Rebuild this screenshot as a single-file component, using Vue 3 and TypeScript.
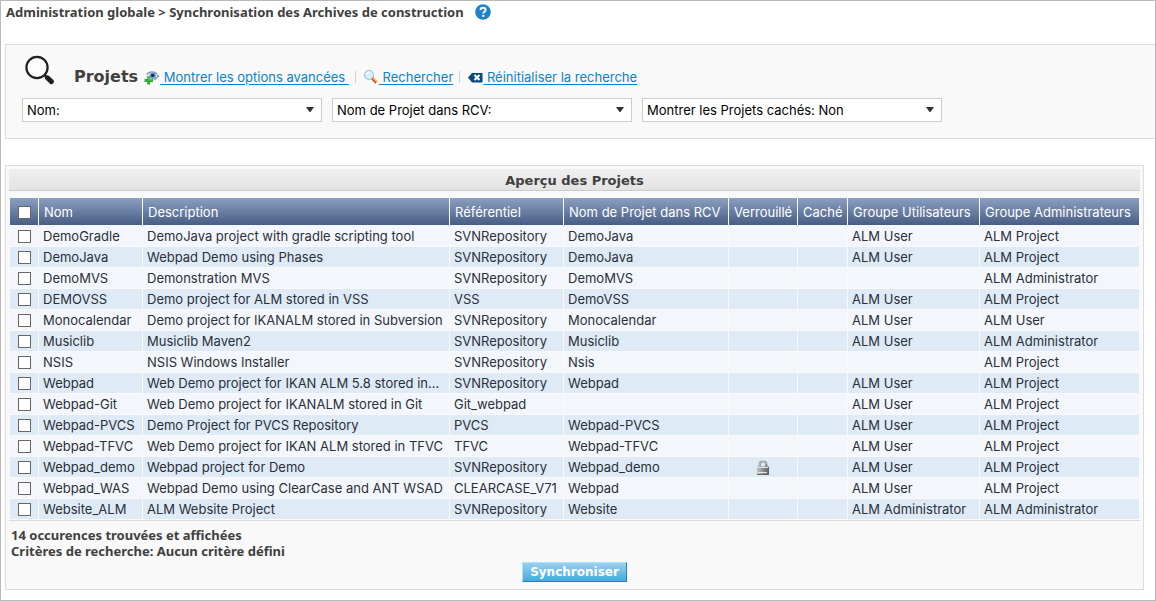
<script setup lang="ts">
interface Project {
  name: string
  description: string
  repository: string
  vcrName: string
  locked?: boolean
  users: string
  admins: string
}

const user = 'ALM User'
const project = 'ALM Project'
const admin = 'ALM Administrator'

const projects: Project[] = [
  { name: 'DemoGradle', description: 'DemoJava project with gradle scripting tool', repository: 'SVNRepository', vcrName: 'DemoJava', users: user, admins: project },
  { name: 'DemoJava', description: 'Webpad Demo using Phases', repository: 'SVNRepository', vcrName: 'DemoJava', users: user, admins: project },
  { name: 'DemoMVS', description: 'Demonstration MVS', repository: 'SVNRepository', vcrName: 'DemoMVS', users: '', admins: admin },
  { name: 'DEMOVSS', description: 'Demo project for ALM stored in VSS', repository: 'VSS', vcrName: 'DemoVSS', users: user, admins: project },
  { name: 'Monocalendar', description: 'Demo project for IKANALM stored in Subversion', repository: 'SVNRepository', vcrName: 'Monocalendar', users: user, admins: user },
  { name: 'Musiclib', description: 'Musiclib Maven2', repository: 'SVNRepository', vcrName: 'Musiclib', users: user, admins: admin },
  { name: 'NSIS', description: 'NSIS Windows Installer', repository: 'SVNRepository', vcrName: 'Nsis', users: '', admins: project },
  { name: 'Webpad', description: 'Web Demo project for IKAN ALM 5.8 stored in...', repository: 'SVNRepository', vcrName: 'Webpad', users: user, admins: project },
  { name: 'Webpad-Git', description: 'Web Demo project for IKANALM stored in Git', repository: 'Git_webpad', vcrName: '', users: user, admins: project },
  { name: 'Webpad-PVCS', description: 'Demo Project for PVCS Repository', repository: 'PVCS', vcrName: 'Webpad-PVCS', users: user, admins: project },
  { name: 'Webpad-TFVC', description: 'Web Demo project for IKAN ALM stored in TFVC', repository: 'TFVC', vcrName: 'Webpad-TFVC', users: user, admins: project },
  { name: 'Webpad_demo', description: 'Webpad project for Demo', repository: 'SVNRepository', vcrName: 'Webpad_demo', locked: true, users: user, admins: project },
  { name: 'Webpad_WAS', description: 'Webpad Demo using ClearCase and ANT WSAD', repository: 'CLEARCASE_V71', vcrName: 'Webpad', users: user, admins: project },
  { name: 'Website_ALM', description: 'ALM Website Project', repository: 'SVNRepository', vcrName: 'Website', users: admin, admins: admin },
]

const filters = ['Nom:', 'Nom de Projet dans RCV:', 'Montrer les Projets cachés: Non']
</script>

<template>
  <main class="page">
    <header class="crumbs">
      <span>Administration globale &gt; Synchronisation des Archives de construction</span>
      <a href="#" class="help" aria-label="Aide">
        <svg width="16" height="16" viewBox="0 0 16 16">
          <circle cx="8" cy="8" r="7.8" fill="#1c83c6" />
          <path d="M5.400 6.200C5.500 4.500 6.500 3.700 8 3.700c1.600 0 2.600.9 2.600 2.200 0 1.900-2.300 1.900-2.300 3.700" fill="none" stroke="#fff" stroke-width="1.900" />
          <rect x="7.200" y="10.800" width="2.100" height="2.100" fill="#fff" />
        </svg>
      </a>
    </header>

    <section class="search">
      <div class="search-head">
        <svg class="lens" width="30" height="30" viewBox="0 0 30 30">
          <circle cx="12" cy="12.500" r="10.600" fill="#fdfdfd" stroke="#231f20" stroke-width="2.200" />
          <path d="M19.500 20l2.500 2.500" stroke="#231f20" stroke-width="2.400" />
          <path d="M22.400 22.800l4 3.800" stroke="#231f20" stroke-width="5" stroke-linecap="round" />
        </svg>
        <h1>Projets</h1>
        <a href="#" class="action">
          <svg width="16" height="16" viewBox="0 0 16 16">
            <path d="M2 7C4 3.500 7 2 10 3c2 .6 3.500 2 4.500 4-1.500 3-4 4.500-6.500 4.500S3.500 10 2 7z" fill="#e3edf5" />
            <path d="M2.500 5.500C5 2.400 10 1.800 13 5" fill="none" stroke="#8098b5" stroke-width="1.300" />
            <circle cx="8.700" cy="6.700" r="3.200" fill="#6e9ccc" />
            <circle cx="8.700" cy="6.400" r="1.700" fill="#122b50" />
            <path d="M13 6l1.500 1-4 4" fill="none" stroke="#8197b1" stroke-width="1.200" />
            <path d="M3.200 7.200h3v2.700H9v3H6.200v2.700h-3v-2.700H.5v-3h2.700z" fill="#35ac35" />
            <path d="M4 8h1.200v2.800H8" fill="none" stroke="#79d36b" stroke-width=".8" />
          </svg><u>&nbsp;Montrer les options avancées&nbsp;</u>
        </a>
        <span class="bar"></span>
        <a href="#" class="action">
          <svg width="16" height="16" viewBox="0 0 16 16">
            <circle cx="6" cy="6" r="4.500" fill="#d7ecfa" stroke="#a5c0d8" stroke-width="1.200" />
            <path d="M3.500 6a2.600 2.600 0 0 1 3-2.600" fill="none" stroke="#fff" stroke-width="1.200" />
            <path d="M9 9l4.500 4.500" stroke="#e97817" stroke-width="2.600" />
            <path d="M8.800 10.300l4.200 4" stroke="#c42d16" stroke-width="1" />
            <path d="M10 9.200l3.500 3.500" stroke="#ffd36b" stroke-width=".8" />
          </svg><u>&nbsp;Rechercher</u>
        </a>
        <span class="bar"></span>
        <a href="#" class="action">
          <svg width="16" height="16" viewBox="0 0 16 16">
            <path d="M1 8.500L5 4h10.500v9.500H5z" fill="#0d4a80" />
            <path d="M7.500 6l5 5M12.500 6l-5 5" stroke="#fff" stroke-width="2" />
          </svg><u>&nbsp;Réinitialiser la recherche</u>
        </a>
      </div>
      <div class="filters">
        <select v-for="label in filters" :key="label" :aria-label="label">
          <option>{{ label }}</option>
        </select>
      </div>
    </section>

    <section class="overview">
      <h2>Aperçu des Projets</h2>
      <div class="table-box">
        <table>
          <colgroup>
            <col class="c-check"><col class="c-name"><col><col class="c-repo"><col class="c-vcr">
            <col class="c-lock"><col class="c-hidden"><col class="c-users"><col class="c-admins">
          </colgroup>
          <thead>
            <tr>
              <th class="check"><input type="checkbox" aria-label="Tout sélectionner"></th>
              <th>Nom</th>
              <th>Description</th>
              <th>Référentiel</th>
              <th>Nom de Projet dans RCV</th>
              <th>Verrouillé</th>
              <th>Caché</th>
              <th>Groupe Utilisateurs</th>
              <th>Groupe Administrateurs</th>
            </tr>
          </thead>
          <tbody>
            <tr v-for="p in projects" :key="p.name">
              <td class="check"><input type="checkbox" :aria-label="p.name"></td>
              <td>{{ p.name }}</td>
              <td>{{ p.description }}</td>
              <td>{{ p.repository }}</td>
              <td>{{ p.vcrName }}</td>
              <td class="lock">
                <svg v-if="p.locked" width="14" height="16" viewBox="0 0 14 16" role="img" aria-label="Verrouillé">
                  <defs>
                    <linearGradient id="lock-body" x1="0" x2="1">
                      <stop offset="0" stop-color="#c4c4c4" />
                      <stop offset=".55" stop-color="#8a8a8a" />
                      <stop offset="1" stop-color="#5c5c5c" />
                    </linearGradient>
                  </defs>
                  <path d="M3.700 8V5C3.700 3.200 5 2.500 7 2.500s3.300.7 3.300 2.500V8" fill="none" stroke="#8b8b8b" stroke-width="2.200" />
                  <path d="M3.700 8V5C3.700 3.200 5 2.500 7 2.500s3.300.7 3.300 2.500" fill="none" stroke="#d8d8d8" stroke-width=".8" />
                  <rect x="1" y="7.500" width="12" height="8.300" rx="1" fill="url(#lock-body)" />
                  <path d="M2 8.500h10M2 13.500h9" stroke="#e4e4e4" stroke-width="1" />
                  <path d="M1 15.500h12" stroke="#555" stroke-width=".8" />
                </svg>
              </td>
              <td></td>
              <td>{{ p.users }}</td>
              <td>{{ p.admins }}</td>
            </tr>
          </tbody>
        </table>
      </div>
      <p class="summary">14 occurences trouvées et affichées<br>Critères de recherche: Aucun critère défini</p>
      <div class="submit"><button type="button">Synchroniser</button></div>
    </section>
  </main>
</template>

<style>
body {
  margin: 0;
  background: #fff;
}
</style>

<style scoped>
.page {
  box-sizing: border-box;
  min-height: 100vh;
  border: 1px solid #b9b9b9;
  padding: 0 0 10px 4px;
  font-family: Inter, Verdana, sans-serif;
  font-size: 13px;
  color: #404040;
}
.crumbs {
  display: flex;
  align-items: center;
  gap: 11px;
  height: 22px;
  padding-left: 1px;
  font-family: "Noto Sans", sans-serif;
  font-weight: bold;
}
.help {
  display: flex;
}
.search {
  margin-top: 21px;
  border: 1px solid #dcdcdc;
  border-right: 0;
  background: #f9f9f9;
  padding: 11px 16px 16px;
}
.search-head {
  display: flex;
  align-items: center;
  height: 42px;
}
.lens {
  margin: 0 19px 14px 3px;
}
h1 {
  margin: 0 6px 0 0;
  font-family: "DejaVu Sans", sans-serif;
  font-size: 16px;
  line-height: 20px;
}
.action {
  display: flex;
  align-items: center;
  color: #0a83cc;
  text-decoration: none;
  white-space: nowrap;
}
.action u {
  text-underline-offset: 2px;
}
.bar {
  width: 1px;
  height: 12px;
  margin: 0 7px 0 6px;
  background: #d0d0d0;
}
.filters {
  display: flex;
  gap: 10px;
}
select {
  appearance: none;
  box-sizing: border-box;
  flex: 0 1 300px;
  min-width: 0;
  height: 24px;
  border: 1px solid #ccc;
  border-radius: 0;
  padding: 0 20px 0 4px;
  background: #fff url("data:image/svg+xml,%3Csvg xmlns='http://www.w3.org/2000/svg' width='8' height='5'%3E%3Cpath d='M0 0h8L4.500 5h-1z' fill='%23333'/%3E%3C/svg%3E") no-repeat right 7px top 8px;
  font: inherit;
  color: #000;
}
.overview {
  margin: 26px 11px 0 0;
  border: 1px solid #dcdcdc;
  background: #f9f9f9;
  padding: 3px 3px 7px;
}
h2 {
  margin: 0;
  border-bottom: 1px solid #ccc;
  background: linear-gradient(#f0f0f0, #e3e3e3);
  padding-top: 2px;
  font-family: "DejaVu Sans", sans-serif;
  font-size: 13px;
  line-height: 19px;
  text-align: center;
}
.table-box {
  margin-top: 6px;
  border-bottom: 1px solid #dcdcdc;
}
table {
  width: 100%;
  table-layout: fixed;
  border-collapse: separate;
  border-spacing: 1px;
  color: #2b2f38;
}
.c-check { width: 28px; }
.c-name { width: 103px; }
.c-repo { width: 113px; }
.c-vcr { width: 164px; }
.c-lock { width: 68px; }
.c-hidden { width: 49px; }
.c-users { width: 131px; }
.c-admins { width: 159px; }
th,
td {
  overflow: hidden;
  padding: 0 4px;
  text-align: left;
  white-space: nowrap;
}
th {
  height: 27px;
  padding: 1px 5px 0;
  box-sizing: border-box;
  background: linear-gradient(#8ba0c0, #475d84);
  color: #fff;
  font-weight: normal;
}
td {
  height: 20px;
  line-height: 20px;
}
tbody tr:nth-child(odd) td { background: #f3f7fc; }
tbody tr:nth-child(even) td { background: #deebf7; }
.check {
  padding-left: 8px;
  padding-right: 0;
}
input {
  appearance: none;
  display: block;
  box-sizing: border-box;
  width: 13px;
  height: 13px;
  margin: 0;
  border: 1px solid #666;
  background: #fff;
}
.lock svg {
  display: block;
  margin: 0 auto;
}
.summary {
  margin: 6px 2px 0;
  font-family: "Noto Sans", sans-serif;
  font-weight: bold;
  line-height: 16px;
}
.submit {
  display: flex;
  justify-content: center;
  margin-top: 3px;
}
button {
  height: 20px;
  border: 1px solid;
  border-color: #a9e6fb #1c86c4 #1c86c4 #a9e6fb;
  padding: 0 7px;
  background: linear-gradient(#9bd0f0, #49a8dc);
  color: #fff;
  font: bold 12px/18px "DejaVu Sans", sans-serif;
}
</style>
